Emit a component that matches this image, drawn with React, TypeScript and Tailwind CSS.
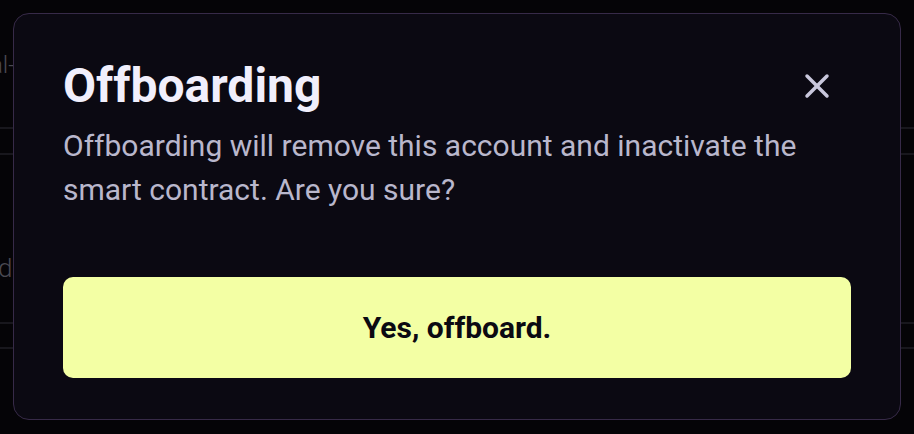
import { X } from 'lucide-react';

export default function App() {
  return (
    <div className="relative w-[914px] h-[434px] overflow-hidden bg-[#050407] font-['Roboto','Liberation_Sans',sans-serif]">
      {/* Page behind the overlay */}
      <div className="flex flex-col h-full">
        <div className="h-[127px] pt-[51px] -ml-[10px] text-[24px] leading-[28px] font-light text-[#4a4952]">al-ops</div>
        <div className="h-[26px] border-t-2 border-[#18171d]" />
        <div className="h-[169px] border-t-2 border-[#18171d] pt-[98px] -ml-[2px] text-[26px] leading-[30px] font-light text-[#4a4952]">
          data
        </div>
        <div className="h-[25px] border-t-2 border-[#18171d]" />
        <div className="flex-1 border-t-2 border-[#18171d]" />
      </div>

      {/* Dialog */}
      <div className="absolute left-[13px] top-[13px] w-[888px] rounded-[16px] border border-[#372a48] bg-[#0b0912] px-[49px] pt-[48px] pb-[41px]">
        <div className="flex items-center justify-between">
          <h2 className="text-[48px] leading-[48px] font-bold text-[#f1effc]">Offboarding</h2>
          <button className="mr-[14px] flex items-center justify-center text-[#c9c7dc]">
            <X size={40} strokeWidth={2.1} />
          </button>
        </div>
        <p className="mt-[14px] text-[30px] leading-[44px] text-[#b9b7cc]">
          Offboarding will remove this account and inactivate the
          <br />
          smart contract. Are you sure?
        </p>
        <button className="mt-[65px] w-full h-[101px] rounded-[10px] bg-[#f3ffa4] text-[30px] font-bold text-[#0b0a12]">
          Yes, offboard.
        </button>
      </div>
    </div>
  );
}
